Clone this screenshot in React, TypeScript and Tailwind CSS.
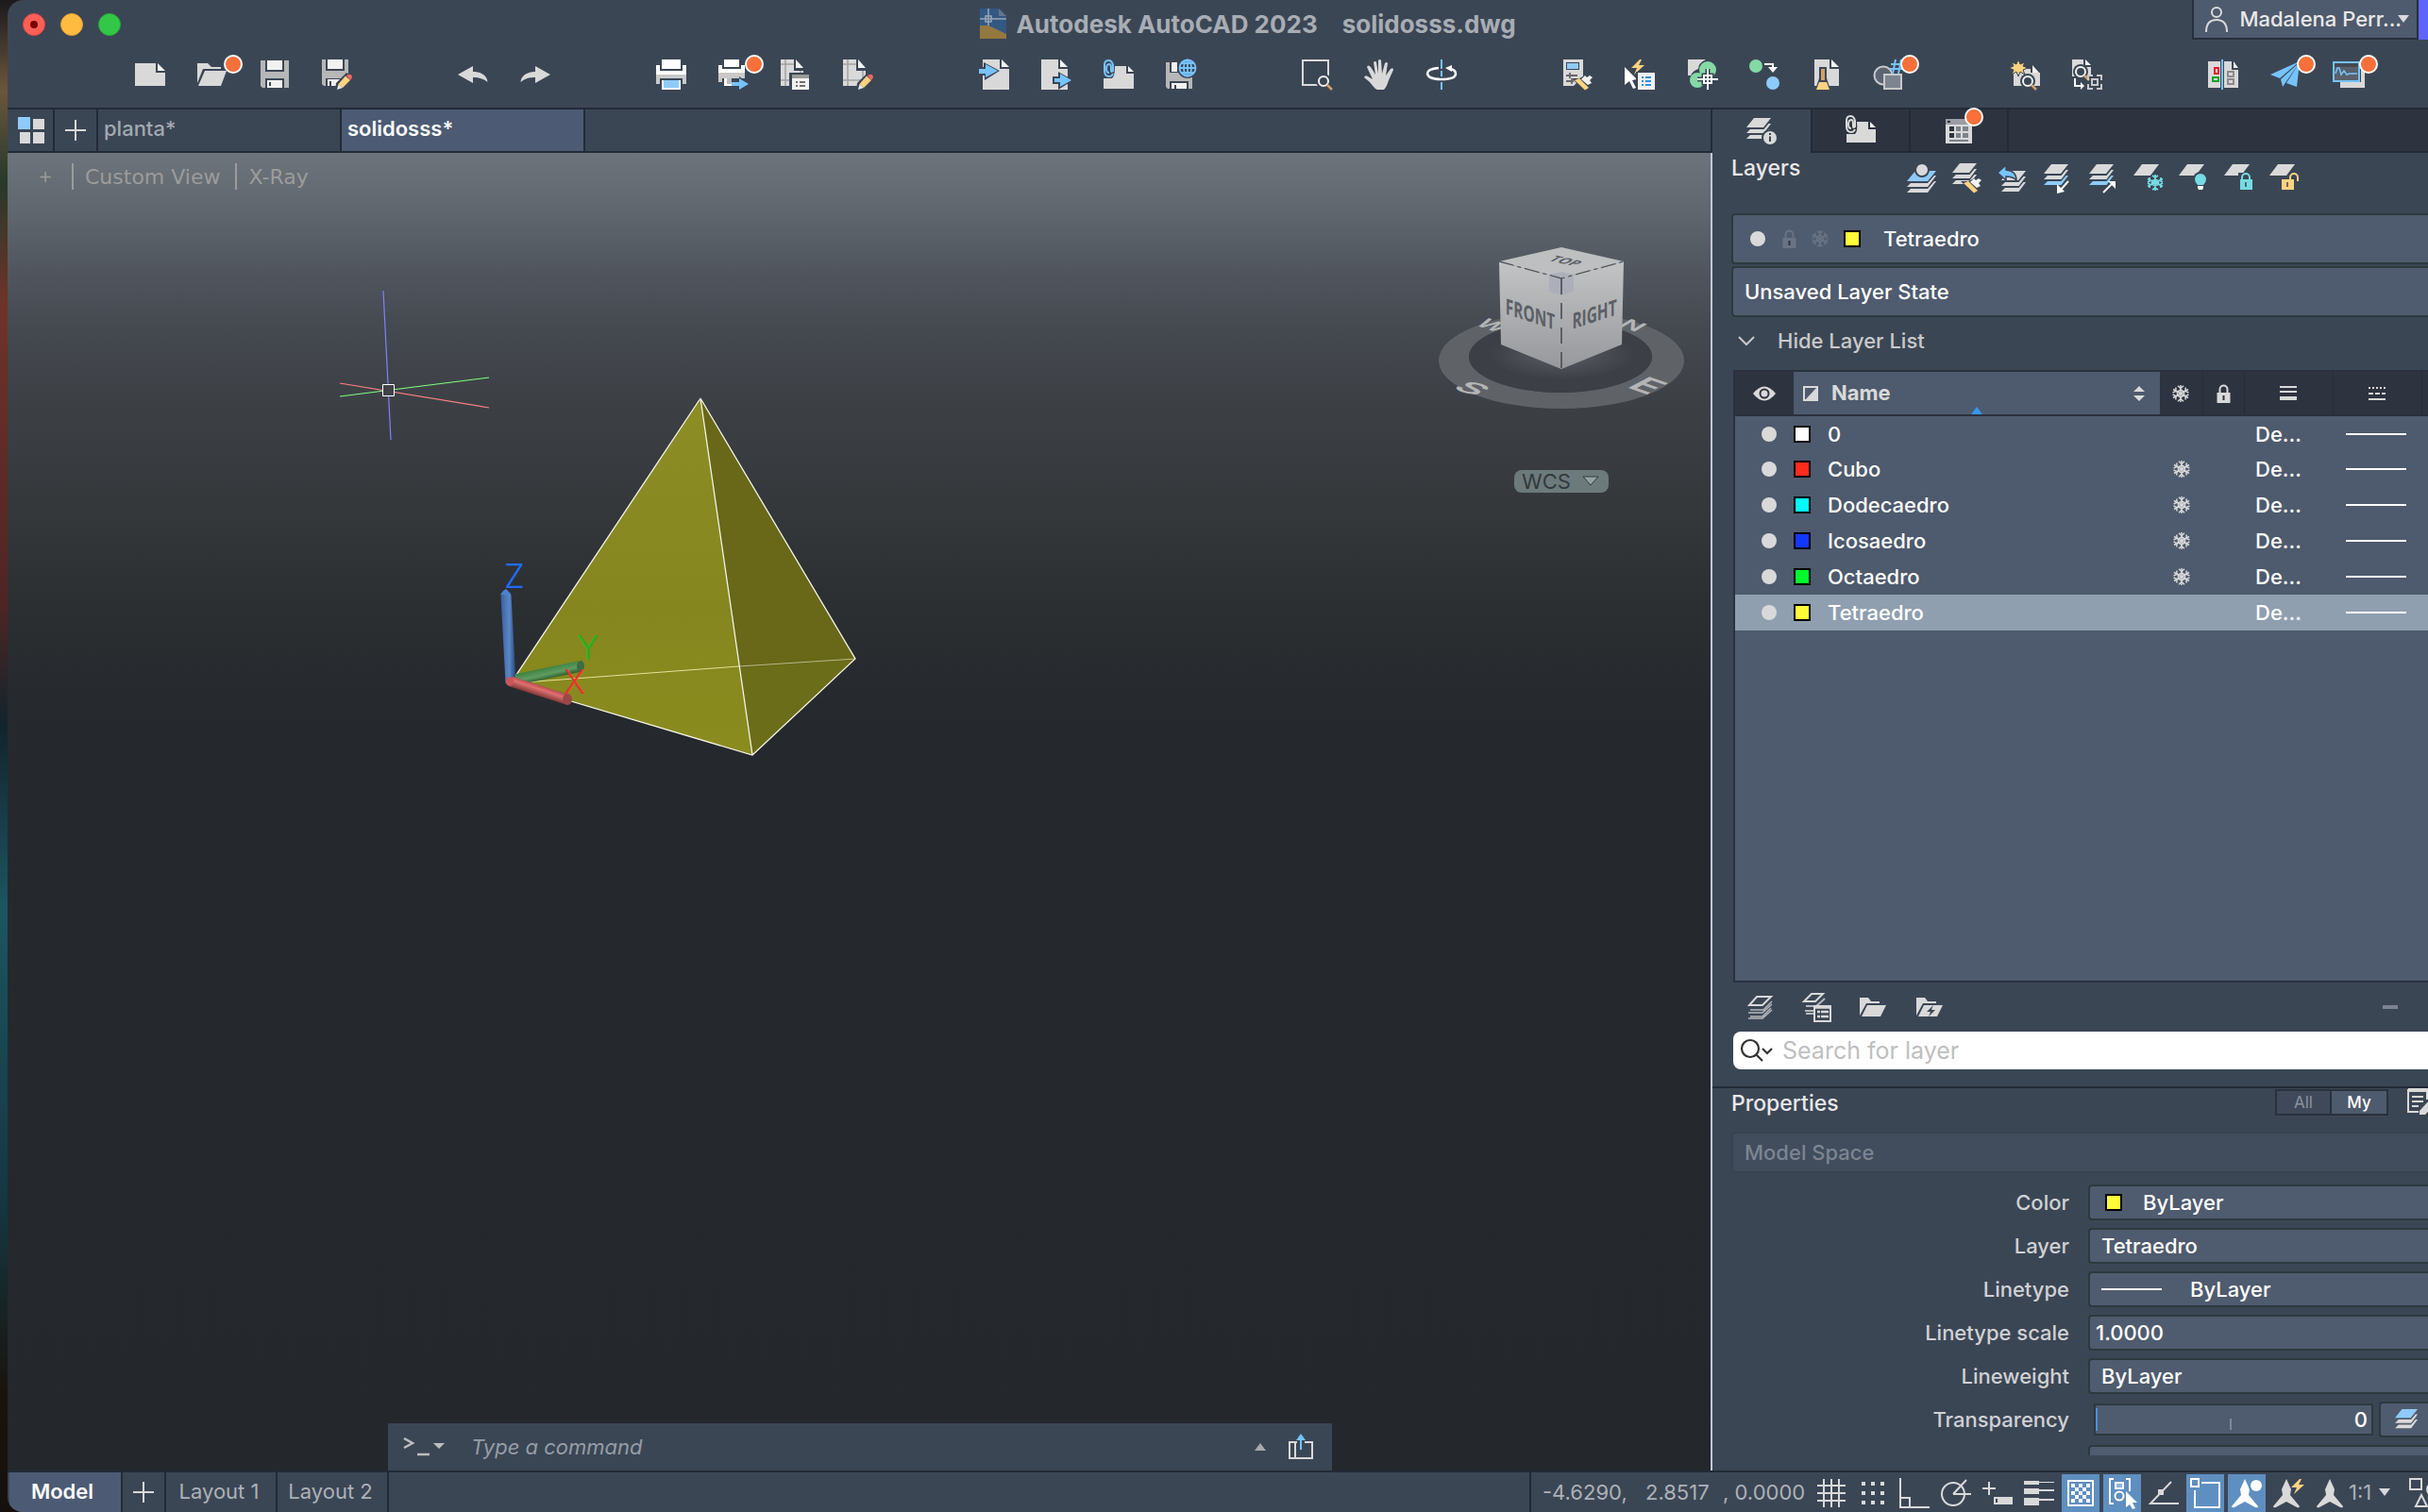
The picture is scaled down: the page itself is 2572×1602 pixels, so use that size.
import React from 'react';
import clsx from 'clsx';

/* ---------- small shared pieces ---------- */

interface IconProps {
  children: React.ReactNode;
  className?: string;
  box?: string;
}

const Icon: React.FC<IconProps> = ({ children, className = 'w-8 h-8', box = '0 0 32 32' }) => (
  <svg viewBox={box} className={clsx('block shrink-0 overflow-visible', className)} fill="none" aria-hidden="true">
    {children}
  </svg>
);

const BG = '#3b4655';
const LIGHT = '#d9d9d9';
const BLUE = '#75c3ff';
const TEAL = '#76dbe3';
const SAND = '#ffd27f';

const Badge = ({ className }: { className: string }) => (
  <span className={clsx('absolute w-5 h-5 rounded-full border-2 border-white bg-[#f9703a]', className)} />
);

const Swatch = ({ className }: { className: string }) => (
  <span className={clsx('block w-[18px] h-[18px] shrink-0 border-2 border-black', className)} />
);

const Snowflake = ({ color = LIGHT, className = 'w-[18px] h-[18px]' }: { color?: string; className?: string }) => (
  <Icon className={className} box="0 0 18 18">
    <g stroke={color} strokeWidth="1.500">
      <path d="M9 0V18M1 4.500L17 13.500M17 4.500L1 13.500" />
      <path d="M9 5L12.500 7V11L9 13L5.500 11V7Z" />
      <path d="M6 .8L9 3.500L12 .8M6 17.200L9 14.500L12 17.200M.6 8L4 6.300L3.800 2.500M.6 10L4 11.700L3.800 15.500M17.400 8L14 6.300L14.200 2.500M17.400 10L14 11.700L14.200 15.500" />
    </g>
  </Icon>
);

const Lock = ({ color = LIGHT, className = 'w-[15px] h-5' }: { color?: string; className?: string }) => (
  <Icon className={className} box="0 0 15 20">
    <path d="M3.500 10V5.500a4 4 0 0 1 8 0V10" stroke={color} strokeWidth="2" />
    <path d="M0.500 9h14v11h-14z" fill={color} />
    <path d="M7.500 12v5" stroke="#2e3340" strokeWidth="2" />
  </Icon>
);

const Pencil = () => (
  <g>
    <path d="M14 33L15 25L26 14L34 19L24 33Z" fill={BG} />
    <path d="M16 32L17.500 26L22 30Z" fill="#e6e6e6" />
    <path d="M17.500 26L25 17.500L30 22L22 30Z" fill={SAND} />
    <path d="M26 17L28 16Q31 15 32 18Q32 20 30 22Z" fill="#f56565" />
  </g>
);

const Brush = ({ x = 0, y = 0 }: { x?: number; y?: number }) => (
  <g transform={`translate(${x} ${y})`}>
    <path d="M10 20L18 20L28 15L34 20L29 33H23Z" fill={BG} />
    <path d="M13 22L18 20L28 30L24 32.500Z" fill={SAND} />
    <path d="M20 21L24 17L26 19L29 17L32 19L29 22L31 25L27 27Z" fill="#f2f2f2" />
  </g>
);

const Lens = ({ x, y }: { x: number; y: number }) => (
  <g transform={`translate(${x} ${y})`}>
    <circle r="8" fill={BG} />
    <circle r="5" stroke="#f2f2f2" strokeWidth="2" />
    <path d="M4 4L9 9" stroke="#d3a069" strokeWidth="2.500" />
  </g>
);

const Bolt = ({ x, y }: { x: number; y: number }) => (
  <path transform={`translate(${x} ${y})`} d="M9 0L0 9H6L3 16L14 6H8L11 0Z" fill={SAND} />
);

/* ---------- top toolbar ---------- */

interface Tool {
  name: string;
  badge?: boolean;
  art: React.ReactNode;
}

const sheetTop = (
  <>
    <path d="M0 0H14V12H20V28H0Z" fill={LIGHT} />
    <path d="M16 0L24 9H16Z" fill="#f2f2f2" />
    <path d="M20 12H24V20H20Z" fill={LIGHT} />
    <path d="M5 0V28M0 5H14M0 22H20M21 12V20" stroke="#a3a3a3" strokeWidth="1.500" />
  </>
);

const toolGroups: Tool[][] = [
  [
    {
      name: 'New',
      art: (
        <>
          <path d="M0 4H22V14H32V28H0Z" fill={LIGHT} />
          <path d="M24 4L32 12H24Z" fill="#f2f2f2" />
        </>
      ),
    },
    {
      name: 'Open',
      badge: true,
      art: (
        <>
          <path d="M0 4H11L15 8H25V10H6L0 25Z" fill={LIGHT} />
          <path d="M8 12H31L25 28H1Z" fill={LIGHT} />
        </>
      ),
    },
    {
      name: 'Save',
      art: (
        <>
          <path d="M1 1H6V13H26V1H31V30H26V20H6V30H3L1 28Z" fill="#b7b7b7" />
          <path d="M8 1H24V11H8ZM8 22H24V30H8Z" fill="#f2f2f2" />
          <path d="M10 24h2v4h-2z" fill={BG} />
        </>
      ),
    },
    {
      name: 'Save As',
      art: (
        <>
          <path d="M0 0H4V12H24V0H28V28H24V20H4V28H2L0 26Z" fill="#b7b7b7" />
          <path d="M6 0H22V10H6ZM6 21H22V28H6Z" fill="#f2f2f2" />
          <path d="M8 23h2v5h-2z" fill={BG} />
          <Pencil />
        </>
      ),
    },
  ],
  [
    { name: 'Undo', art: <path d="M0 16L16 7V13C26 13 31 18 31.500 24C27 20 22 19 16 19V25Z" fill={LIGHT} /> },
    { name: 'Redo', art: <path d="M32 16L16 7V13C6 13 1 18 .5 24C5 20 10 19 16 19V25Z" fill={LIGHT} /> },
  ],
  [
    {
      name: 'Plot',
      art: (
        <>
          <path d="M6 0H26V10H6Z" fill="#fff" />
          <path d="M0 6H4V12H28V6H32V16H0Z" fill="#fff" />
          <path d="M0 16H32V26H28V20H4V26H0Z" fill="#c9c9c9" />
          <path d="M6 22H26V32H6Z" fill="#fff" />
          <path d="M8 22H24V30H8Z" fill="#8ecbfa" />
        </>
      ),
    },
    {
      name: 'Batch Publish',
      badge: true,
      art: (
        <>
          <path d="M6 0H22V8H6Z" fill="#fff" />
          <path d="M0 6H4V10H24V6H28V14H0Z" fill="#fff" />
          <path d="M0 14H28V20H4V24H0Z" fill="#c9c9c9" />
          <path d="M6 20H14V28H6Z" fill="#fff" />
          <path d="M9 20H14V26H9Z" fill="#bdbdbd" />
          <path d="M14 23H22V18L33 26L22 34V30H14Z" fill={BG} />
          <path d="M14 24H22V20L32 26L22 32V28H14Z" fill={BLUE} />
        </>
      ),
    },
    {
      name: 'Page Setup',
      art: (
        <>
          {sheetTop}
          <path d="M9 14H32V34H9Z" fill={BG} />
          <path d="M12 16H30V32H12Z" fill="#f2f2f2" />
          <path d="M12 16H30V20H12Z" fill="#9a9a9a" />
          <path d="M16 24h2m2 0h6M16 28h2m2 0h6" stroke="#444" strokeWidth="1.500" />
        </>
      ),
    },
    {
      name: 'Edit Sheet',
      art: (
        <>
          {sheetTop}
          <Pencil />
        </>
      ),
    },
  ],
  [
    {
      name: 'Import',
      art: (
        <>
          <path d="M4 0H22V10H32V32H4Z" fill={LIGHT} />
          <path d="M24 0L32 8H24Z" fill="#f2f2f2" />
          <path d="M-1 8H5V3L22 12L6 22V17H-1Z" fill={BG} />
          <path d="M0 10H7V5L20 12L7 19V15H0Z" fill={BLUE} />
        </>
      ),
    },
    {
      name: 'Export',
      art: (
        <>
          <path d="M0 0H18V10H28V32H0Z" fill={LIGHT} />
          <path d="M20 0L28 8H20Z" fill="#f2f2f2" />
          <path d="M12 18H18V13L34 22L18 32V26H12Z" fill={BG} />
          <path d="M14 20H20V15L32 22L20 29V24H14Z" fill={BLUE} />
        </>
      ),
    },
    {
      name: 'Attach',
      art: (
        <>
          <path d="M0 20H9Q12 18 12 7H24V15H32V31H0Z" fill={LIGHT} />
          <path d="M26 7L32 13H26Z" fill="#f2f2f2" />
          <path d="M6 14Q3 14 3 10Q3 5 6 5Q8 5 8 9V12Q8 14 10 12V6Q9 1 5 1Q1 1 1 6V12Q1 18 6 18Q9 18 10 15" stroke={BLUE} strokeWidth="2" />
        </>
      ),
    },
    {
      name: 'Save to Web',
      art: (
        <>
          <path d="M0 3H4V14H24V19H28V31H24V23H4V31H2L0 29Z" fill="#b7b7b7" />
          <path d="M6 3H12V13H6ZM6 25H22V31H6Z" fill="#f2f2f2" />
          <path d="M9 27h2v4h-2z" fill={BG} />
          <circle cx="23" cy="9" r="11" fill={BG} />
          <g stroke={BLUE} strokeWidth="1.800">
            <circle cx="23" cy="9" r="8.500" />
            <ellipse cx="23" cy="9" rx="4" ry="8.500" />
            <path d="M23 0V18M14 9H32M16 4H30M16 14H30" />
          </g>
        </>
      ),
    },
  ],
  [
    {
      name: 'Zoom Window',
      art: (
        <>
          <path d="M1 1H28V27H1Z" stroke={LIGHT} strokeWidth="2" />
          <Lens x={23} y={23} />
        </>
      ),
    },
    {
      name: 'Pan',
      art: (
        <path
          d="M12 31Q9 28 6 24L0 19Q1 16 4 18L9 21L3 8Q4 5 7 8L12 16L10 3Q12 1 13 3L15 15L15 1Q17 -1 18 1L19 15L22 4Q24 2 25 4L23 17L28 10Q31 8 31 11L26 22Q24 29 21 32H14Z"
          fill={LIGHT}
        />
      ),
    },
    {
      name: '3D Orbit',
      art: (
        <>
          <path d="M16 0V10M16 12V18M16 24V32" stroke={BLUE} strokeWidth="2" />
          <path d="M13 9Q1 10 1 15Q2 21 16 21Q31 21 31 15Q31 11 25 10" stroke="#fff" strokeWidth="2.500" />
          <path d="M20 9L27 6V13Z" fill="#fff" />
        </>
      ),
    },
  ],
  [
    {
      name: 'Match Properties',
      art: (
        <>
          <path d="M1 0H22V18L12 28H1Z" fill={LIGHT} />
          <path d="M4 3H18V11H4Z" fill={BG} />
          <path d="M5 4H17V10H5Z" fill="#8ecbfa" />
          <path d="M4 17H16M8 14V20M4 23H12M10 20V26" stroke="#666" strokeWidth="1.800" />
          <Brush />
        </>
      ),
    },
    {
      name: 'Quick Select',
      art: (
        <>
          <path d="M0 8L13 21L8 22L12 30L9 31L5 23L0 27Z" fill="#fff" />
          <Bolt x={7} y={0} />
          <path d="M12 13H34V34H12Z" fill={BG} />
          <path d="M14 14H32V32H14Z" fill="#f2f2f2" />
          <path d="M18 19h2m2 0h6M18 23h2m2 0h6M18 27h2m2 0h6" stroke="#2b8fe6" strokeWidth="2" />
        </>
      ),
    },
    {
      name: 'Group',
      art: (
        <>
          <path d="M1 0H20Q12 4 12 10Q6 12 4 17H1Z" fill={LIGHT} />
          <circle cx="22" cy="11" r="9" fill="#84d9a5" />
          <circle cx="11" cy="22" r="8" fill="#84d9a5" />
          <path d="M22 10V32M11 21H33M18 17h8v8h-8z" stroke={BG} strokeWidth="5" />
          <path d="M22 10V32M11 21H33M18 17h8v8h-8z" stroke="#fff" strokeWidth="2" />
        </>
      ),
    },
    {
      name: 'Convert',
      art: (
        <>
          <circle cx="7" cy="7" r="7" fill="#84d9a5" />
          <circle cx="25" cy="25" r="7" fill="#8ecbfa" />
          <path d="M16 5H25V9" stroke="#fff" strokeWidth="2" />
          <path d="M20 8H30L25 14Z" fill="#fff" />
        </>
      ),
    },
    {
      name: 'Purge',
      art: (
        <>
          <path d="M3 0H19V10H29V28H3Z" fill={LIGHT} />
          <path d="M21 0L29 8H21Z" fill="#f2f2f2" />
          <path d="M8 8H16V20L20 32H4L8 20Z" fill={BG} />
          <path d="M10 10H14V22H10Z" fill="#d3a069" />
          <path d="M8 24H16L19 32H5Z" fill={SAND} />
        </>
      ),
    },
    {
      name: 'Count',
      badge: true,
      art: (
        <>
          <circle cx="10" cy="17" r="9.500" stroke="#c9c9c9" strokeWidth="2" fill="#5d6571" />
          <path d="M11 16H29V31H11Z" stroke="#c9c9c9" strokeWidth="2" fill="#7d8590" />
          <path d="M16 -1H32V15H20Z" fill={BG} />
          <path d="M23 0L20 15M29 0L26 15M18 5H32M17 10H31" stroke={BLUE} strokeWidth="2" />
        </>
      ),
    },
  ],
  [
    {
      name: 'Render',
      art: (
        <>
          <path d="M4 10H22V14H32V28H4Z" fill={LIGHT} />
          <path d="M24 6L31 14H24Z" fill="#f2f2f2" />
          <path d="M9 0L11 5L16 3L14 7L19 9L14 11L16 16L11 13L9 18L7 13L2 16L4 11L-1 9L4 7L2 3L7 5Z" fill={SAND} stroke={BG} strokeWidth="1" />
          <Lens x={19} y={23} />
        </>
      ),
    },
    {
      name: 'Section Detail',
      art: (
        <>
          <path d="M0 0H12V8H20V18H0Z" fill={LIGHT} />
          <path d="M14 0L20 6H14Z" fill="#f2f2f2" />
          <Lens x={9} y={13} />
          <path d="M3 20V28H10" stroke="#fff" strokeWidth="2" />
          <path d="M9 24L13 28L9 32Z" fill="#fff" />
          <path d="M17 22V17H22M26 17H31V22M31 26V31H26M22 31H17V26M21 21H27V27H21Z" stroke="#c9c9c9" strokeWidth="2" />
        </>
      ),
    },
  ],
  [
    {
      name: 'Compare',
      art: (
        <>
          <path d="M0 2H13V30H0ZM17 2H25V11H32V30H17Z" fill={LIGHT} />
          <path d="M27 2L32 9H27Z" fill="#f2f2f2" />
          <path d="M7 9H11V15H7Z" stroke="#f0122c" strokeWidth="2" />
          <path d="M5 19H11V23H5Z" stroke="#17a52f" strokeWidth="2" />
          <path d="M21 13H27V18H21ZM21 21H27V26H21Z" stroke="#8b8b8b" strokeWidth="2" />
          <path d="M15 0V32" stroke={BLUE} strokeWidth="2" />
        </>
      ),
    },
    {
      name: 'Share',
      badge: true,
      art: <path d="M0 16L31 2L10 20ZM31 3L13 29L11 21ZM31 3L28 29L17 25Z" fill={BLUE} />,
    },
    {
      name: 'Performance',
      badge: true,
      art: (
        <>
          <path d="M8 24H30V8H34V30H8Z" fill={LIGHT} />
          <path d="M1 3H28V23H1Z" fill="#454b55" stroke={BLUE} strokeWidth="2" />
          <path d="M2 8H27V22H2Z" fill="#5b616b" />
          <path d="M3 15L5 9L7 9L9 16L12 12L15 16L18 15L26 15" stroke={BLUE} strokeWidth="1.500" />
        </>
      ),
    },
  ],
];

const Header = () => (
  <header className="shrink-0 bg-[#3b4655] border-b-2 border-[#222b36] pb-2 rounded-tl-2xl">
    <div className="grid grid-cols-[1fr_auto_1fr] items-start h-[52px]">
      <div className="flex gap-4 pt-[14px] pl-4">
        <button aria-label="Close" className="grid place-items-center w-6 h-6 rounded-full bg-[#fe5f57] border border-[#e14640]">
          <span className="w-2 h-2 rounded-full bg-[#7a0004]" />
        </button>
        <button aria-label="Minimize" className="w-6 h-6 rounded-full bg-[#febb40] border border-[#e0a033]" />
        <button aria-label="Zoom" className="w-6 h-6 rounded-full bg-[#33c748] border border-[#27aa35]" />
      </div>
      <div className="flex items-center gap-[10px] ml-16 h-[50px] whitespace-nowrap text-[26px] font-bold text-[#a8adb4]">
        <Icon className="w-7 h-8" box="0 0 28 32">
          <path d="M0 0H20V8H28V32H0Z" fill="#325884" />
          <path d="M20 0L28 8H20Z" fill="#60758e" />
          <path d="M0 18H9L28 27V32H0Z" fill="#93793f" />
          <path d="M9 0V18M0 11H28M6 8H12V14H6Z" stroke="#9aa6b5" strokeWidth="1.500" />
        </Icon>
        <h1>Autodesk AutoCAD 2023</h1>
        <span className="ml-4">solidosss.dwg</span>
      </div>
      <div className="flex justify-end">
        <button className="flex items-center h-[42px] pl-3 pr-2 bg-[#4e5a6d] border-2 border-t-0 border-[#272f3c] text-[22px] font-medium text-[#e8e8e8]">
          <Icon className="w-6 h-7" box="0 0 24 28">
            <circle cx="12" cy="7" r="5" stroke={LIGHT} strokeWidth="2" />
            <path d="M1 28Q1 15 12 15Q23 15 23 28" stroke={LIGHT} strokeWidth="2" />
          </Icon>
          <span className="pl-3 whitespace-nowrap">Madalena Perr...</span>
          <Icon className="w-3 h-2 -ml-1" box="0 0 12 8">
            <path d="M0 0H12L6 8Z" fill={LIGHT} />
          </Icon>
        </button>
        <span className="w-2.5 h-[42px] bg-[#5f64ff]" />
      </div>
    </div>
    <nav aria-label="Tools" className="flex items-center gap-[78px] h-[54px] pl-[118px]">
      {toolGroups.map((group, i) => (
        <div key={i} className="flex shrink-0">
          {group.map((tool) => (
            <button key={tool.name} aria-label={tool.name} className="relative grid place-items-center w-[66px] h-8 shrink-0">
              <Icon>{tool.art}</Icon>
              {tool.badge && <Badge className="left-[45px] -top-[5px]" />}
            </button>
          ))}
        </div>
      ))}
    </nav>
  </header>
);

/* ---------- drawing area ---------- */

const DocumentTabs = () => (
  <div className="flex shrink-0 h-[46px] pl-0.5 bg-[#3b4655] border-b-2 border-[#222b36] text-[22px]">
    <button aria-label="Start" className="grid place-items-center w-12 border-r-2 border-[#222b36]">
      <Icon className="w-7 h-7" box="0 0 28 28">
        <path d="M0 0H13V13H0Z" fill="#8ecbfa" />
        <path d="M16 2H28V13H16ZM2 16H13V28H2ZM16 16H28V28H16Z" fill={LIGHT} />
      </Icon>
    </button>
    <button aria-label="New tab" className="grid place-items-center w-[46px] border-r-2 border-[#222b36]">
      <Icon className="w-[22px] h-[22px]" box="0 0 22 22">
        <path d="M11 0V22M0 11H22" stroke={LIGHT} strokeWidth="2" />
      </Icon>
    </button>
    <button className="w-[258px] pl-1.5 pb-1 text-left font-medium text-[#a3a9b1] border-r-2 border-[#222b36]">planta*</button>
    <button className="w-[258px] pl-1.5 pb-1 text-left font-semibold text-white bg-[#4c5b73] border-r-2 border-[#222b36]">solidosss*</button>
  </div>
);

const ModelDrawing = () => (
  <svg viewBox="340 290 600 530" className="absolute left-[332px] top-[128px] w-[600px] h-[530px]" fill="none" role="img" aria-label="Tetraedro solid">
    <defs>
      <linearGradient id="faceLeft" x1="0" y1="0" x2="0" y2="1">
        <stop offset="0" stopColor="#8c8d24" />
        <stop offset="0.600" stopColor="#85861e" />
        <stop offset="1" stopColor="#8b8c1e" />
      </linearGradient>
      <linearGradient id="axisZ" gradientUnits="userSpaceOnUse" x1="531" y1="0" x2="545" y2="0">
        <stop offset="0" stopColor="#3a62a0" />
        <stop offset="0.600" stopColor="#5b87c6" />
        <stop offset="1" stopColor="#2f5288" />
      </linearGradient>
      <linearGradient id="axisY" gradientUnits="userSpaceOnUse" x1="580" y1="706" x2="583" y2="719">
        <stop offset="0" stopColor="#3c7f3d" />
        <stop offset="0.600" stopColor="#5f9c62" />
        <stop offset="1" stopColor="#2b5c2c" />
      </linearGradient>
      <linearGradient id="axisX" gradientUnits="userSpaceOnUse" x1="572" y1="725" x2="568" y2="737">
        <stop offset="0" stopColor="#a84444" />
        <stop offset="0.400" stopColor="#e07070" />
        <stop offset="1" stopColor="#7c3434" />
      </linearGradient>
    </defs>
    <path d="M742 422L541 724L797 800Z" fill="url(#faceLeft)" />
    <path d="M742 422L797 800L906 698Z" fill="#686818" />
    <path d="M783 708L797 800L906 698Z" fill="#6c6d19" />
    <path d="M541 724L783 706" stroke="#e3e39a" />
    <path d="M783 706L906 698" stroke="#b9b98a" />
    <path d="M742 422L541 724L797 800L906 698L742 422L797 800" stroke="#f4f4e8" strokeWidth="1.300" />
    <path d="M541 724L536 630" stroke="url(#axisZ)" strokeWidth="11" />
    <path d="M530 630L533 626L536 624L541 629V631Z" fill="#4a82d0" />
    <path d="M547 720L614 706" stroke="url(#axisY)" strokeWidth="12" />
    <ellipse cx="615" cy="706" rx="4" ry="6" fill="#3a6e40" />
    <path d="M541 722L600 741" stroke="url(#axisX)" strokeWidth="11" />
    <ellipse cx="540" cy="722" rx="4" ry="5" fill="#c85858" />
    <ellipse cx="601" cy="741" rx="5" ry="6" fill="#9c4747" />
    <g className="font-['Inter'] font-light text-[35px]">
      <text x="534" y="623" fill="#1f6cf5">Z</text>
      <text x="611" y="699" fill="#22b422">Y</text>
      <text x="597" y="735" fill="#f03030">X</text>
    </g>
    <path d="M406 308L414 466" stroke="#8080ff" strokeWidth="1.200" />
    <path d="M360 420L518 400" stroke="#80ff80" strokeWidth="1.200" />
    <path d="M360 406L518 432" stroke="#ff8080" strokeWidth="1.200" />
    <path d="M405.500 407.500H417.500V419.500H405.500Z" fill="#3f4349" stroke="#fff" />
  </svg>
);

const ViewCube = () => (
  <svg viewBox="0 0 310 230" className="absolute right-0.5 top-[68px] w-[310px] h-[230px]" fill="none" role="img" aria-label="View cube">
    <defs>
      <linearGradient id="cubeFace" x1="0" y1="0" x2="0" y2="1">
        <stop offset="0" stopColor="#c3c4c6" />
        <stop offset="1" stopColor="#97989b" />
      </linearGradient>
      <radialGradient id="cubeShade">
        <stop offset="0" stopColor="#5a5e64" />
        <stop offset="1" stopColor="#5a5e64" stopOpacity="0" />
      </radialGradient>
    </defs>
    <path
      d="M24 152A130 51 0 0 0 284 152A130 51 0 0 0 24 152ZM56 148A97 38 0 0 1 250 148A97 38 0 0 1 56 148Z"
      fill="#5f6368"
      fillRule="evenodd"
    />
    <path d="M56 148A97 38 0 0 1 250 148A97 38 0 0 1 56 148Z" fill="#3c4046" />
    <ellipse cx="154" cy="146" rx="78" ry="26" fill="url(#cubeShade)" />
    {/* compass letters lie flat on the ring: x runs east, up runs north */}
    <g className="font-['Inter'] font-semibold" fill="#b4b5b7">
      <text fontSize="28" transform="matrix(.9 .3 -.75 .35 61 114)">W</text>
      <text fontSize="30" transform="matrix(.9 .3 -.6 .35 213 115)">N</text>
      <text fontSize="36" transform="matrix(1.100 .38 -.75 .32 37 181)">S</text>
      <text fontSize="36" transform="matrix(1.150 .4 -.85 .45 222 180)">E</text>
    </g>
    <path d="M154 32L220 47L154 65L88 47Z" fill="#bebfc1" />
    <path d="M88 47L154 65V161L90 135Z" fill="url(#cubeFace)" />
    <path d="M220 47L154 65V161L218 135Z" fill="url(#cubeFace)" />
    <path d="M154 58L167 61V79L154 83L141 79V61Z" fill="#a9adb8" opacity=".8" />
    <path d="M88 47L154 65L220 47" stroke="#54585d" strokeWidth="1.300" strokeDasharray="16 4 4 4" />
    <path d="M154 65V161" stroke="#54585d" strokeWidth="1.800" strokeDasharray="17 9" />
    <g className="font-['Open_Sans'] font-bold" fill="#5b6066">
      <text fontSize="23" textAnchor="middle" transform="matrix(.67 .22 0 1 121 111)">FRONT</text>
      <text fontSize="23" textAnchor="middle" transform="matrix(.67 -.22 0 1 189 111)">RIGHT</text>
      <text fontSize="16" textAnchor="middle" transform="matrix(.9 .2 -.8 .45 154 49)">TOP</text>
    </g>
  </svg>
);

const Canvas = () => (
  <main className="relative flex-1 min-h-0 font-['Inter',sans-serif] bg-[linear-gradient(180deg,#6d747b_0px,#5e656d_68px,#50555d_128px,#44484f_190px,#3c4045_268px,#34383b_378px,#2b2f32_478px,#25292d_600px,#24272b_100%)]">
    <div className="flex items-center h-[50px] pl-[26px] gap-3 font-['DejaVu_Sans'] text-[22px] text-[#9c9c9a] [text-shadow:1px_1px_1px_#4b4f54]">
      <button aria-label="Viewport controls" className="w-7 text-lg">+</button>
      <span className="w-0.5 h-7 ml-0.5 bg-[#9c9c9a]" />
      <button className="pr-1">Custom View</button>
      <span className="w-0.5 h-7 bg-[#9c9c9a]" />
      <button>X-Ray</button>
    </div>
    <ModelDrawing />
    <ViewCube />
    <button className="absolute right-[108px] top-[336px] flex items-center justify-between w-[100px] h-6 pl-2 pr-2.5 rounded-lg bg-[#6d7a7c] text-[22px] leading-6 text-[#33393d]">
      WCS
      <Icon className="w-[18px] h-2.5" box="0 0 18 10">
        <path d="M1 0H17L9 9Z" fill="#94a3a5" stroke="#33393d" />
      </Icon>
    </button>
    <form className="absolute left-[403px] bottom-0 flex items-center w-[1000px] h-[50px] pl-4 pr-5 bg-[#3b4655]">
      <button type="button" aria-label="Recent commands">
        <Icon className="w-11 h-5" box="0 0 44 20">
          <path d="M1 1L10 6L1 11M15 18H28" stroke="#bdbdbd" strokeWidth="2.500" />
          <path d="M32 6H44L38 12Z" fill="#bdbdbd" />
        </Icon>
      </button>
      <input
        aria-label="Command"
        placeholder="Type a command"
        className="flex-1 ml-7 bg-transparent text-[22px] italic outline-none placeholder:text-[#969da6]"
      />
      <Icon className="w-3 h-2" box="0 0 12 8">
        <path d="M0 8L6 0L12 8Z" fill="#a9a9a9" />
      </Icon>
      <button type="button" aria-label="Share history" className="ml-6">
        <Icon className="w-[26px] h-7" box="0 0 26 28">
          <path d="M9 9H1V26H25V9H17M7 9V26" stroke={LIGHT} strokeWidth="2" />
          <path d="M13 4V17" stroke={BLUE} strokeWidth="2" />
          <path d="M8 7L13 0L18 7Z" fill={BLUE} />
        </Icon>
      </button>
    </form>
  </main>
);

/* ---------- layers palette ---------- */

/* Stack of three sheets, upper left corner at the origin */
const Stack = ({ colors, y = 0, x = 0 }: { colors: [string, string, string]; x?: number; y?: number }) => (
  <g transform={`translate(${x} ${y})`}>
    <path d="M8 0H26L18 10H0Z" fill={colors[0]} />
    <path d="M4 12H18.500L23.500 6H26L18.500 16H0Z" fill={colors[1]} />
    <path d="M4 18H18.500L23.500 12H26L18.500 22H0Z" fill={colors[2]} />
  </g>
);

const grey: [string, string, string] = [LIGHT, LIGHT, LIGHT];
const singleSheet = <path d="M9 1H27L18 13H0Z" fill={LIGHT} />;

const layerTools: Tool[] = [
  {
    name: 'Make current',
    art: (
      <>
        <path d="M9 8H31L22 19H0Z" fill="#8ecbfa" />
        <path d="M4 21H22L29 13H31L22 25H0ZM4 27H22L29 19H31L22 31H0Z" fill={LIGHT} />
        <circle cx="16" cy="7" r="8" fill={BG} />
        <circle cx="16" cy="7" r="6" fill={LIGHT} />
      </>
    ),
  },
  {
    name: 'Match',
    art: (
      <>
        <Stack colors={grey} />
        <Brush x={-1} y={-1} />
      </>
    ),
  },
  {
    name: 'Previous',
    art: (
      <>
        <g transform="translate(4 8)">
          <Stack colors={grey} />
        </g>
        <path d="M0 10L9 2V7Q20 8 20 18Q16 14 9 14V18Z" fill={BLUE} stroke={BG} strokeWidth="1.500" />
      </>
    ),
  },
  {
    name: 'Isolate',
    art: (
      <>
        <Stack x={1} y={1} colors={[LIGHT, LIGHT, '#8ecbfa']} />
        <path d="M27 19L19 28" stroke="#fff" strokeWidth="2" />
        <path d="M15 32V22L23 30Z" fill="#fff" />
      </>
    ),
  },
  {
    name: 'Unisolate',
    art: (
      <>
        <Stack x={1} y={1} colors={[LIGHT, LIGHT, '#8ecbfa']} />
        <path d="M16 31L27 20" stroke="#fff" strokeWidth="2" />
        <path d="M21 19H29V27Z" fill="#fff" />
      </>
    ),
  },
  {
    name: 'Freeze',
    art: (
      <>
        {singleSheet}
        <circle cx="23" cy="20" r="9" fill={BG} />
        <g transform="translate(14 12)" stroke={TEAL} strokeWidth="1.800">
          <path d="M9 0V17M1 4.500L17 12.500M17 4.500L1 12.500M9 5L12.500 7V10L9 12L5.500 10V7Z" />
          <path d="M6 1L9 3L12 1M6 16L9 14L12 16M1 8L3 7V3M1 9L3 10V14M17 8L15 7V3M17 9L15 10V14" />
        </g>
      </>
    ),
  },
  {
    name: 'Off',
    art: (
      <>
        {singleSheet}
        <circle cx="23" cy="17" r="8" fill={BG} />
        <path d="M20 23Q17 20 17 17A6 6 0 0 1 29 17Q29 20 26 23Z" fill={TEAL} />
        <path d="M20 24H26V26L25 28H21L20 26Z" fill="#fff" />
      </>
    ),
  },
  {
    name: 'Lock',
    art: (
      <>
        {singleSheet}
        <path d="M15 10H31V30H15Z" fill={BG} />
        <path d="M19 19V15a4 4 0 0 1 8 0V19" stroke={TEAL} strokeWidth="2" />
        <path d="M17 17H30V28H17Z" fill={TEAL} />
        <path d="M23 20V25" stroke={BG} strokeWidth="1.500" />
      </>
    ),
  },
  {
    name: 'Unlock',
    art: (
      <>
        {singleSheet}
        <path d="M11 14H28V30H11Z" fill={BG} />
        <path d="M22 19V15a4 4 0 0 1 8 0V19" stroke={SAND} strokeWidth="2" />
        <path d="M13 17H26V28H13Z" fill={SAND} />
        <path d="M19 20V25" stroke={BG} strokeWidth="1.500" />
      </>
    ),
  },
];

interface Layer {
  name: string;
  swatch: string;
  frozen: boolean;
  current?: boolean;
}

const layers: Layer[] = [
  { name: '0', swatch: 'bg-white', frozen: false },
  { name: 'Cubo', swatch: 'bg-[#ff2b1c]', frozen: true },
  { name: 'Dodecaedro', swatch: 'bg-[#00fbff]', frozen: true },
  { name: 'Icosaedro', swatch: 'bg-[#1437ff]', frozen: true },
  { name: 'Octaedro', swatch: 'bg-[#00f92c]', frozen: true },
  { name: 'Tetraedro', swatch: 'bg-[#fffb38]', frozen: false, current: true },
];

const PaletteTabs = () => (
  <div className="flex shrink-0 h-[46px] bg-[#2e3340]">
    <button aria-label="Layers palette" className="grid place-items-center w-[106px] border-l-2 border-[#222b36] bg-[#3b4655]">
      <Icon>
        <Stack colors={grey} y={2} />
        <circle cx="25" cy="23" r="9" fill={BG} />
        <circle cx="25" cy="23" r="7" fill={LIGHT} />
        <path d="M25 18V20M25 21.500V27" stroke={BG} strokeWidth="2" />
      </Icon>
    </button>
    <div className="flex flex-1 border-b-2 border-l-2 border-[#222b36]">
      <button aria-label="References" className="grid place-items-center w-[104px] border-r-2 border-[#222b36]">
        <Icon>
          <path d="M1 20H10Q13 18 12 7H24V15H32V29H1Z" fill={LIGHT} />
          <path d="M26 7L32 13H26Z" fill="#f2f2f2" />
          <path d="M6 14Q3 14 3 10Q3 5 6 5Q8 5 8 9V12Q8 14 10 12V6Q9 1 5 1Q1 1 1 6V12Q1 18 6 18Q9 18 10 15" stroke={LIGHT} strokeWidth="2" />
        </Icon>
      </button>
      <button aria-label="Sheet sets" className="relative grid place-items-center w-[104px] border-r-2 border-[#222b36]">
        <Icon>
          <path d="M2 4H30V30H2Z" fill={LIGHT} />
          <path d="M2 4H30V10H2Z" fill="#9b9da3" />
          <path d="M4 6h3v2h-3z" fill="#2e3340" />
          <path d="M6 12H11V17H6ZM6 19H11V24H6Z" fill="#2e3340" />
          <path d="M13 12H18V17H13ZM20 12H26V17H20ZM13 19H18V24H13ZM20 19H26V24H20ZM6 26H26V28H6Z" fill="#7d828b" />
        </Icon>
        <Badge className="left-[57px] -top-0.5" />
      </button>
    </div>
  </div>
);

const head = 'relative p-0 border-b-2 border-[#2a313d] bg-[#2e3340]';

const LayerTable = () => (
  <div className="flex-1 min-h-0 ml-0.5 bg-[#4e5a6d] border-2 border-r-0 border-[#2a313d]">
    <table className="w-full table-fixed border-collapse text-[22px] font-medium text-white">
      <colgroup>
        <col className="w-[62px]" />
        <col className="w-[388px]" />
        <col className="w-[45px]" />
        <col className="w-11" />
        <col className="w-[94px]" />
        <col className="w-[94px]" />
        <col />
      </colgroup>
      <thead>
        <tr className="h-[46px]">
          <th className={head} aria-label="Visible">
            <Icon className="w-6 h-4 mx-auto" box="0 0 24 16">
              <path d="M0 8Q12 -7 24 8Q12 23 0 8Z" fill={LIGHT} />
              <circle cx="12" cy="8" r="4.500" stroke="#2e3340" strokeWidth="2" />
            </Icon>
          </th>
          <th className="relative p-0 border-b-2 border-[#2a313d] bg-[#4e5a6d]">
            <div className="flex items-center px-2.5 font-bold text-[#d9d9d9]">
              <Icon className="w-4 h-4" box="0 0 16 16">
                <path d="M1 1H15V15H1Z" stroke={LIGHT} strokeWidth="2" />
                <path d="M15 1V15H2Z" fill={LIGHT} />
              </Icon>
              <span className="flex-1 pl-3.5 text-left">Name</span>
              <Icon className="w-3 h-4 mr-1.5" box="0 0 12 16">
                <path d="M0 6L6 0L12 6ZM0 10L6 16L12 10Z" fill={LIGHT} />
              </Icon>
            </div>
            <Icon className="absolute left-1/2 bottom-0 w-3 h-2 -ml-1.5" box="0 0 12 8">
              <path d="M0 8L6 0L12 8Z" fill="#3597f0" />
            </Icon>
          </th>
          <th className={head} aria-label="Frozen">
            <span className="grid place-items-center"><Snowflake /></span>
          </th>
          <th className={clsx(head, 'border-l border-l-[#252d38]')} aria-label="Locked">
            <span className="grid place-items-center"><Lock /></span>
          </th>
          <th className={clsx(head, 'border-l border-l-[#252d38]')} aria-label="Lineweight">
            <Icon className="w-[18px] h-4 mx-auto" box="0 0 18 16">
              <path d="M0 1H18" stroke={LIGHT} strokeWidth="2" />
              <path d="M0 6H18" stroke={LIGHT} strokeWidth="2" />
              <path d="M0 13H18" stroke={LIGHT} strokeWidth="4" />
            </Icon>
          </th>
          <th className={clsx(head, 'border-l border-l-[#252d38]')} aria-label="Linetype">
            <Icon className="w-[18px] h-4 mx-auto" box="0 0 18 16">
              <path d="M0 2H18" stroke={LIGHT} strokeWidth="2" strokeDasharray="2 2" />
              <path d="M0 8H18" stroke={LIGHT} strokeWidth="2" strokeDasharray="5 2" />
              <path d="M0 14H18" stroke={LIGHT} strokeWidth="2" />
            </Icon>
          </th>
          <th className={clsx(head, 'border-l border-l-[#252d38]')} />
        </tr>
      </thead>
      <tbody>
        {layers.map((layer) => (
          <tr key={layer.name} className={clsx('h-[38px]', layer.current && 'bg-[#8f9fb0]')}>
            <td className="p-0 pl-7">
              <span className="block w-4 h-4 rounded-full bg-[#d9d9d9]" />
            </td>
            <td className="p-0">
              <div className="flex items-center gap-[18px] leading-7">
                <Swatch className={layer.swatch} />
                {layer.name}
              </div>
            </td>
            <td className="p-0">{layer.frozen && <span className="grid place-items-center"><Snowflake /></span>}</td>
            <td className="p-0" />
            <td className="p-0 pl-3 leading-7">De...</td>
            <td className="p-0 pl-3.5"><span className="block w-16 h-0.5 bg-white" /></td>
            <td className="p-0" />
          </tr>
        ))}
      </tbody>
    </table>
  </div>
);

const field = 'flex items-center bg-[#4f5b6e] border-2 border-r-0 border-[#2c3a3e] rounded-l text-white';

const LayersPalette = () => (
  <section className="flex flex-col flex-1 min-h-0 pl-5">
    <div className="flex items-start h-16">
      <h2 className="w-[186px] leading-8 text-[23px] font-medium text-[#e8e8e8]">Layers</h2>
      <div className="flex gap-4 mt-[11px]">
        {layerTools.map((tool) => (
          <button key={tool.name} aria-label={tool.name}>
            <Icon>{tool.art}</Icon>
          </button>
        ))}
      </div>
    </div>
    <div className={clsx(field, 'h-[54px] mb-0.5 pl-[18px] shrink-0')}>
      <span className="w-4 h-4 rounded-full bg-[#d9d9d9]" />
      <span className="ml-[18px]"><Lock color="#697383" /></span>
      <span className="mx-4"><Snowflake color="#697383" /></span>
      <Swatch className="bg-[#fffb38]" />
      <select aria-label="Current layer" className="flex-1 ml-6 appearance-none bg-transparent font-medium outline-none">
        <option>Tetraedro</option>
      </select>
    </div>
    <div className={clsx(field, 'h-[54px] pl-3 shrink-0')}>
      <select aria-label="Layer state" className="flex-1 appearance-none bg-transparent font-medium outline-none">
        <option>Unsaved Layer State</option>
      </select>
    </div>
    <button className="flex items-center h-[50px] mb-1.5 pl-[7px] gap-6 shrink-0 font-medium text-[#c9c9c9]">
      <Icon className="w-[18px] h-2.5" box="0 0 18 10">
        <path d="M1 1L9 9L17 1" stroke="#c9c9c9" strokeWidth="2" />
      </Icon>
      Hide Layer List
    </button>
    <LayerTable />
    <div className="flex items-center h-[52px] pl-4 pr-8 gap-8 shrink-0">
      <button aria-label="New layer">
        <Icon className="w-7 h-7" box="0 0 28 28">
          <path d="M11 3H26L17 12H3Z" stroke={LIGHT} strokeWidth="2" />
          <path d="M4 17H18L27 8M2 20H17L27 11M4 24H17L26 15M2 26H17L27 17" stroke="#b5b8bd" strokeWidth="1.500" />
        </Icon>
      </button>
      <button aria-label="Layer states">
        <Icon className="w-7 h-7" box="0 0 28 28">
          <path d="M9 0H21L13 8H1Z" stroke={LIGHT} strokeWidth="2" />
          <path d="M3 13H14L23 5M2 18H12M3 21H11" stroke="#b5b8bd" strokeWidth="2" />
          <path d="M12 13H29V29H12Z" fill={BG} stroke={LIGHT} strokeWidth="2" />
          <path d="M12 14.500H29M15 19h3m1 0h8M15 24h3m1 0h8" stroke={LIGHT} strokeWidth="2.500" />
        </Icon>
      </button>
      <button aria-label="New group">
        <Icon className="w-7 h-7" box="0 0 28 28">
          <path d="M0 4H9L12 8H21V10H7L0 23Z" fill={LIGHT} />
          <path d="M8 12H28L22 24H2Z" fill={LIGHT} />
        </Icon>
      </button>
      <button aria-label="New dynamic group">
        <Icon className="w-7 h-7" box="0 0 28 28">
          <path d="M0 4H9L12 8H21V10H7L0 23Z" fill={LIGHT} />
          <path d="M8 12H28L22 24H2Z" fill={LIGHT} />
          <path d="M18 12L11 19H15L13 24L20 17H16L18 12Z" fill={BG} />
        </Icon>
      </button>
      <button aria-label="Delete" className="w-4 h-1 ml-auto bg-[#7c8490]" />
    </div>
    <div className="flex items-center h-10 ml-0.5 pl-2 gap-2.5 shrink-0 rounded-l-lg bg-white">
      <Icon className="w-[34px] h-6" box="0 0 34 24">
        <circle cx="10" cy="10" r="9" stroke="#333" strokeWidth="2.200" />
        <path d="M16 16L23 23M23 10L28 15L33 10" stroke="#333" strokeWidth="2.200" />
      </Icon>
      <input aria-label="Search for layer" placeholder="Search for layer" className="flex-1 pt-0.5 text-[25px] outline-none placeholder:text-[#bfbfbf]" />
    </div>
  </section>
);

/* ---------- properties palette ---------- */

interface PropertyRowProps {
  id: string;
  label: string;
  children: React.ReactNode;
}

const PropertyRow: React.FC<PropertyRowProps> = ({ id, label, children }) => (
  <div className="grid grid-cols-[358px_1fr] gap-5 h-[38px] shrink-0">
    <label htmlFor={id} className="self-center text-right font-medium text-[#cfd1d4]">{label}</label>
    {children}
  </div>
);

const PropertySelect = ({ id, value }: { id: string; value: string }) => (
  <select id={id} className="flex-1 appearance-none bg-transparent font-medium outline-none">
    <option>{value}</option>
  </select>
);

const PropertiesPalette = () => (
  <section className="flex flex-col shrink-0 h-[407px] mt-[18px] pb-4 pl-5 border-t-2 border-[#222b36]">
    <div className="flex items-start h-[46px] shrink-0">
      <h2 className="flex-1 leading-8 text-[23px] font-medium text-[#e8e8e8]">Properties</h2>
      <div className="flex h-7 mt-px mr-5 border-2 border-[#2a313d] text-[17px] leading-6">
        <button className="w-14 bg-[#3f495a] text-[#8a929d]">All</button>
        <button className="w-[60px] bg-[#4e5a6d] border-l-2 border-[#2a313d] font-medium text-white">My</button>
      </div>
      <Icon className="w-[22px] h-7" box="0 0 22 28">
        <path d="M1 1H21V12M12 25H1V1" stroke={LIGHT} strokeWidth="2" />
        <path d="M1 2.500H21" stroke={LIGHT} strokeWidth="3" />
        <path d="M5 9H17M5 14H17M5 19H12" stroke={LIGHT} strokeWidth="2" />
        <path d="M13 28V24L24 12L29 17L19 28Z" fill={LIGHT} />
      </Icon>
    </div>
    <div className="flex items-center h-11 pl-3 mb-3 shrink-0 bg-[#414c5d] border-2 border-r-0 border-[#37434f] rounded-l">
      <select aria-label="Selection" disabled className="flex-1 appearance-none bg-transparent font-medium opacity-100 text-[#7c8591]">
        <option>Model Space</option>
      </select>
    </div>
    <div className="flex flex-col gap-2 flex-1 min-h-0 overflow-hidden">
      <PropertyRow id="color" label="Color">
        <div className={clsx(field, 'pl-4')}>
          <Swatch className="mr-[22px] bg-[#fffb38]" />
          <PropertySelect id="color" value="ByLayer" />
        </div>
      </PropertyRow>
      <PropertyRow id="layer" label="Layer">
        <div className={clsx(field, 'pl-3')}>
          <PropertySelect id="layer" value="Tetraedro" />
        </div>
      </PropertyRow>
      <PropertyRow id="linetype" label="Linetype">
        <div className={clsx(field, 'pl-3')}>
          <span className="w-16 h-0.5 mr-[30px] bg-white" />
          <PropertySelect id="linetype" value="ByLayer" />
        </div>
      </PropertyRow>
      <PropertyRow id="scale" label="Linetype scale">
        <div className={clsx(field, 'pl-1.5')}>
          <input id="scale" defaultValue="1.0000" className="flex-1 bg-transparent font-medium outline-none" />
        </div>
      </PropertyRow>
      <PropertyRow id="lineweight" label="Lineweight">
        <div className={clsx(field, 'pl-3')}>
          <PropertySelect id="lineweight" value="ByLayer" />
        </div>
      </PropertyRow>
      <PropertyRow id="transparency" label="Transparency">
        <div className="flex items-center gap-1.5 pl-1.5">
          <div className="relative flex w-[296px] h-[34px] bg-[#4f5b6e] border-2 border-[#2c3a3e]">
            <span className="w-0.5 h-6 my-auto bg-[#4a90e8]" />
            <input id="transparency" defaultValue="0" className="flex-1 min-w-0 pr-1 text-right bg-transparent font-medium text-white outline-none" />
            <span className="absolute left-[142px] bottom-1 w-0.5 h-3 bg-[#7f8895]" />
          </div>
          <button aria-label="Transparency by layer" className={clsx(field, 'flex-1 h-[38px] pl-3.5')}>
            <Icon className="w-7 h-6" box="0 0 28 26">
              <Stack y={1} colors={['#8ecbfa', LIGHT, LIGHT]} />
            </Icon>
          </button>
        </div>
      </PropertyRow>
      <PropertyRow id="textstyle" label="Text style">
        <div className={clsx(field, 'pl-3')}>
          <PropertySelect id="textstyle" value="Legenda" />
        </div>
      </PropertyRow>
    </div>
  </section>
);

/* ---------- status bar ---------- */

const annotationArrow = <path d="M14 1L19 12L18 18L28 30Q28 32 25 31L14 25L3 31Q0 32 0 30L10 18L9 12Z" />;

const statusTools: { name: string; on?: boolean; art: React.ReactNode }[] = [
  { name: 'Grid', art: <path d="M8 1V31M16 1V31M24 1V31M1 8H31M1 16H31M1 24H31" stroke={LIGHT} strokeWidth="2" /> },
  {
    name: 'Snap',
    art: <path d="M4 6H28M4 16H28M4 26H28" stroke={LIGHT} strokeWidth="4" strokeDasharray="4 6" />,
  },
  {
    name: 'Ortho',
    art: <path d="M1 0V31H32M1 21H11V31" stroke={LIGHT} strokeWidth="2" />,
  },
  {
    name: 'Polar',
    art: (
      <g stroke={LIGHT} strokeWidth="2">
        <circle cx="13" cy="17" r="12" />
        <path d="M13 17H32M13 17L27 2" />
      </g>
    ),
  },
  {
    name: 'Dynamic input',
    art: (
      <>
        <path d="M7 4V18M0 11H14" stroke={LIGHT} strokeWidth="2" />
        <path d="M12 20H32V28H12Z" fill={LIGHT} />
        <path d="M15 22V26" stroke={BG} strokeWidth="2" />
      </>
    ),
  },
  {
    name: 'Lineweight',
    art: <path d="M0 3H16V4H32V5H16V7H0ZM0 11H16V12H32V14H16V17H0ZM0 21H16V22H32V24H16V29H0Z" fill={LIGHT} />,
  },
  {
    name: 'Transparency',
    on: true,
    art: (
      <>
        <path d="M3 3H29V29H3Z" stroke="#fff" strokeWidth="2" />
        <path d="M6 8H26M6 16H26M6 24H26" stroke="#fff" strokeWidth="4" strokeDasharray="4 4" />
        <path d="M10 12H26M10 20H26" stroke="#fff" strokeWidth="4" strokeDasharray="4 4" />
      </>
    ),
  },
  {
    name: 'Selection cycling',
    on: true,
    art: (
      <>
        <path d="M7 1H3V27H7M20 1H24V14" stroke="#fff" strokeWidth="2" />
        <path d="M9 5H17V11H9Z" fill="#8fb4dc" stroke="#fff" strokeWidth="2" />
        <circle cx="13" cy="19" r="4.500" stroke="#fff" strokeWidth="2" />
        <path d="M20 14L32 26L27 26L30 32L27 33L24 28L20 31Z" fill="#fff" />
      </>
    ),
  },
  {
    name: 'Object snap tracking',
    art: (
      <>
        <path d="M24 4L2 27H32" stroke={LIGHT} strokeWidth="2" />
        <path d="M10 12H16V18H10Z" fill={LIGHT} />
      </>
    ),
  },
  {
    name: 'Object snap',
    on: true,
    art: <path d="M1 1H9V9H1ZM12 5H31V31H5V13" stroke="#fff" strokeWidth="2" />,
  },
  {
    name: 'Annotation visibility',
    on: true,
    art: (
      <>
        <g fill="#fff">{annotationArrow}</g>
        <circle cx="26" cy="8" r="8" fill="#5f8fc0" />
        <circle cx="26" cy="8" r="6" fill="#fff" />
      </>
    ),
  },
  {
    name: 'Auto scale',
    art: (
      <>
        <g fill={LIGHT}>{annotationArrow}</g>
        <Bolt x={19} y={1} />
      </>
    ),
  },
  {
    name: 'Annotation scale',
    art: <g fill={LIGHT} transform="translate(2 0)">{annotationArrow}</g>,
  },
];

const StatusBar = () => (
  <footer className="flex shrink-0 h-11 pl-0.5 overflow-hidden bg-[#3b4655] border-t-2 border-[#222b36] text-[22px] text-[#adb1b7]">
    <button className="w-[120px] pr-1.5 pb-0.5 border-r-2 border-[#222b36] bg-[#4c5b73] font-semibold text-white">Model</button>
    <button aria-label="New layout" className="grid place-items-center w-[46px] border-r-2 border-[#222b36]">
      <Icon className="w-[22px] h-[22px]" box="0 0 22 22">
        <path d="M11 0V22M0 11H22" stroke={LIGHT} strokeWidth="2" />
      </Icon>
    </button>
    <button className="w-[118px] pr-1 pb-0.5 border-r-2 border-[#222b36]">Layout 1</button>
    <button className="w-[118px] pr-1 pb-0.5 border-r-2 border-[#222b36]">Layout 2</button>
    <div className="flex items-center ml-auto border-l-2 border-[#222b36] pl-3 whitespace-nowrap">
      <span className="w-[109px]">-4.6290,</span>
      <span className="w-[82px]">2.8517</span>
      <span className="w-[95px]">, 0.0000</span>
      <div className="flex gap-1 self-end">
        {statusTools.map((tool) => (
          <button key={tool.name} aria-label={tool.name} className={clsx('grid place-items-center w-10 h-10', tool.on && 'bg-[#5f8fc0]')}>
            <Icon>{tool.art}</Icon>
          </button>
        ))}
      </div>
      <button className="flex items-center gap-2 w-[64px]">
        1:1
        <Icon className="w-3 h-2" box="0 0 12 8">
          <path d="M0 0H12L6 8Z" fill={LIGHT} />
        </Icon>
      </button>
      <button aria-label="Workspace" className="w-5 overflow-hidden">
        <Icon>
          <path d="M1 2H13V13H1ZM7 31L13 19L19 31Z" stroke={LIGHT} strokeWidth="2" />
          <circle cx="25" cy="13" r="6" stroke={LIGHT} strokeWidth="2" />
        </Icon>
      </button>
    </div>
  </footer>
);

const App: React.FC = () => (
  <div className="h-screen pl-2 overflow-hidden font-['Inter',sans-serif] text-[22px] bg-[linear-gradient(180deg,#1c1a1c_0%,#6b563c_6%,#28392a_12%,#6e3328_20%,#4e2524_40%,#12242c_48%,#1d5560_60%,#14363f_80%,#1a140e_92%,#15100c_100%)]">
    <div className="flex flex-col h-full overflow-hidden rounded-l-2xl">
      <Header />
      <div className="flex flex-1 min-h-0">
        <div className="flex flex-col flex-1 min-w-0">
          <DocumentTabs />
          <Canvas />
        </div>
        <aside className="flex flex-col w-[760px] shrink-0 bg-[#3b4655]">
          <PaletteTabs />
          <div className="flex flex-col flex-1 min-h-0 border-l-2 border-[#c5c6d8]">
            <LayersPalette />
            <PropertiesPalette />
          </div>
        </aside>
      </div>
      <StatusBar />
    </div>
  </div>
);

export default App;
